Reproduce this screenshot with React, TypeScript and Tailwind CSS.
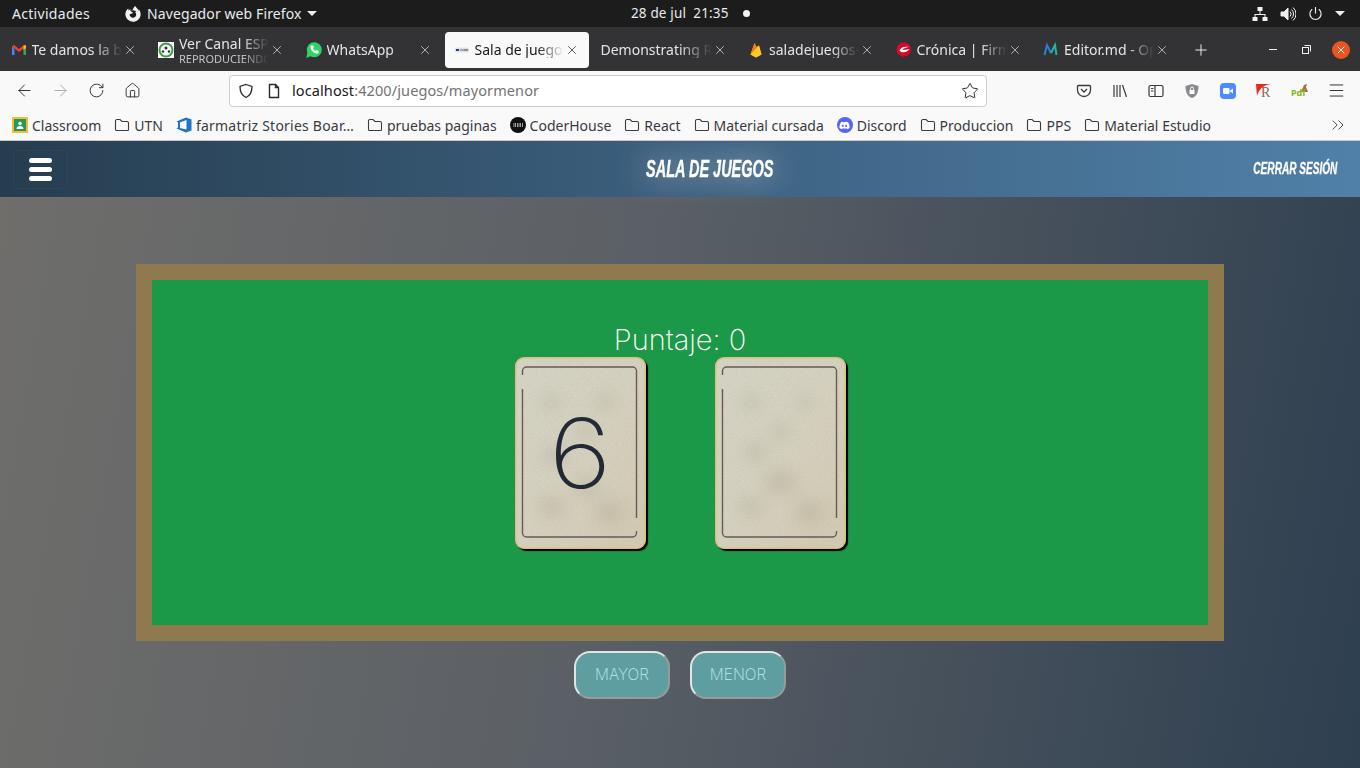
import React from "react";
import { ArrowLeft, ArrowRight, RotateCw, Home, Star, Menu, ChevronsRight, X, Plus, Phone } from "lucide-react";
import { FaFirefoxBrowser, FaDiscord } from "react-icons/fa";

const Folder = () => (
  <svg width="16" height="16" viewBox="0 0 16 16" fill="none" stroke="#3b3b3f" strokeWidth="1.1" className="shrink-0">
    <path d="M1.5 12.5V4a1.5 1.5 0 0 1 1.5-1.5h3l2 2h5A1.5 1.5 0 0 1 14.5 6v6.500A1 1 0 0 1 13.500 13.500h-11A1 1 0 0 1 1.500 12.500z" />
  </svg>
);

const Gmail = () => (
  <svg width="16" height="16" viewBox="0 0 16 16" className="shrink-0">
    <path d="M1 4v9h2.500V7z" fill="#4285f4" />
    <path d="M15 4v9h-2.500V7z" fill="#34a853" />
    <path d="M1 4.500 3 3l5 4 5-4 2 1.500-7 5.500z" fill="#ea4335" />
    <path d="M12.500 3.600 15 3v3l-2.500 2z" fill="#fbbc04" />
  </svg>
);

const Soccer = () => (
  <svg width="16" height="16" viewBox="0 0 16 16" className="shrink-0">
    <rect width="16" height="16" fill="#fff" />
    <circle cx="8" cy="8" r="7.500" fill="#3f9b45" />
    <circle cx="8" cy="8" r="5.500" fill="#f4f4f4" />
    <circle cx="8" cy="6" r="1.500" fill="#333" />
    <circle cx="5" cy="9.500" r="1.200" fill="#333" />
    <circle cx="11" cy="9.500" r="1.200" fill="#333" />
  </svg>
);

const WhatsApp = () => (
  <span className="relative h-4 w-4 shrink-0">
    <svg width="16" height="16" viewBox="0 0 16 16" className="absolute left-0 top-0">
      <circle cx="8.300" cy="7.700" r="7.500" fill="#2fd366" />
      <path d="M0.200 16 1.500 10.500 5 14z" fill="#2fd366" />
    </svg>
    <Phone size={9} fill="#fff" color="#fff" className="absolute left-[4px] top-[3px]" />
  </span>
);

const Gamepad = () => (
  <svg width="16" height="16" viewBox="0 0 16 16" className="shrink-0">
    <rect x="0.500" y="5.500" width="15" height="5" rx="2.500" fill="#dfe3e8" />
    <rect x="2" y="7" width="3" height="2" fill="#2d3f7a" />
    <rect x="6" y="7.500" width="4" height="1" fill="#6a7380" />
    <circle cx="11" cy="8" r="1" fill="#c0504d" />
    <circle cx="13" cy="8" r="1" fill="#3f8f4f" />
  </svg>
);

const Firebase = () => (
  <svg width="16" height="16" viewBox="0 0 16 16" className="shrink-0">
    <path d="M2.500 12.500 6.500 1l2 4L11 3.500l2.500 9L8 15.500z" fill="#ffa000" />
    <path d="M2.500 12.500 6.500 1 9 6z" fill="#f57f17" />
    <path d="M2.500 12.500 11 3.500l2.500 9L8 15.500z" fill="#ffca28" />
  </svg>
);

const Cronica = () => (
  <svg width="16" height="16" viewBox="0 0 16 16" className="shrink-0">
    <path d="M8 0.500a7 7 0 0 1 0 14l-1 1-1-1.200A7 7 0 0 1 8 0.500z" fill="#d9082a" />
    <path d="M3.500 8.500c1-3 5-4.500 9-3.500-2.500.5-4.500 1-6 2.500 2 .5 4.500 0 7-.5-2 3-7.500 5-10 1.500z" fill="#fff" />
  </svg>
);

const EditorM = () => (
  <svg width="16" height="16" viewBox="0 0 16 16" className="shrink-0" fill="none" strokeWidth="2">
    <path d="M1.500 13 4 3l4 8" stroke="#2d7fd3" />
    <path d="M8 11l4-8 1.500 10" stroke="#24b3a8" />
  </svg>
);

const Classroom = () => (
  <svg width="16" height="16" viewBox="0 0 16 16" className="shrink-0">
    <rect width="16" height="16" rx="1" fill="#f9bb2d" />
    <rect x="2" y="2" width="12" height="12" fill="#249a5a" />
    <circle cx="8" cy="6.500" r="1.700" fill="#fff" />
    <path d="M4.500 12c0-2 1.500-3 3.500-3s3.500 1 3.500 3z" fill="#fff" />
  </svg>
);

const Azure = () => (
  <svg width="16" height="16" viewBox="0 0 16 16" className="shrink-0">
    <path d="M0.500 4.500 10 0.500 15.500 2.500v11L10 15.500 0.500 11.500l1.500-1V5.500z" fill="#1e73c9" />
    <path d="M4 5.500 10.500 3v9.500l-6.500-1.500z" fill="#fff" />
  </svg>
);

const Coder = () => (
  <svg width="16" height="16" viewBox="0 0 16 16" className="shrink-0">
    <circle cx="8" cy="8" r="8" fill="#111" />
    <rect x="3" y="6" width="10" height="4" fill="#dcdcdc" opacity=".7" />
    <path d="M4 6v4M6.500 6v4M9 6v4M11.500 6v4" stroke="#111" strokeWidth="1" />
  </svg>
);

type TabData = { title: string; icon: React.ReactNode; sub?: string; active?: boolean };

const tabs: TabData[] = [
  { title: "Te damos la bienvenida", icon: <Gmail /> },
  { title: "Ver Canal ESPN", sub: "REPRODUCIENDO", icon: <Soccer /> },
  { title: "WhatsApp", icon: <WhatsApp /> },
  { title: "Sala de juegos", icon: <Gamepad />, active: true },
  { title: "Demonstrating React", icon: null },
  { title: "saladejuegos-tp", icon: <Firebase /> },
  { title: "Crónica | Firmes", icon: <Cronica /> },
  { title: "Editor.md - Open", icon: <EditorM /> },
];

function Tab({ t }: { t: TabData }) {
  return (
    <div
      className={
        "relative flex h-9 shrink-0 items-center gap-[5px] rounded-[4px] pl-[9px] " +
        (t.active
          ? "ml-[0.500px] mr-[1.500px] w-[144px] bg-[#f9f9fa] pr-[10px] text-[#18181a]"
          : "w-[146px] pr-[11px] text-[#e4e4e6]")
      }
    >
      {t.icon}
      <div className="-mr-[4px] min-w-0 flex-1 overflow-hidden whitespace-nowrap [mask-image:linear-gradient(to_right,black_70%,transparent_100%)]">
        <div className="text-[14px] leading-[17px]">{t.title}</div>
        {t.sub && <div className="text-[11px] leading-[13px] text-[#c4c4c6]">{t.sub}</div>}
      </div>
      <X size={14} strokeWidth={1.2} className="shrink-0" />
    </div>
  );
}

function Bookmark({ label, icon, wide }: { label: string; icon?: React.ReactNode; wide?: boolean }) {
  return (
    <div className="flex shrink-0 items-center gap-[4px] whitespace-nowrap">
      {icon ?? <Folder />}
      <span className={wide ? "tracking-[0.22px]" : ""}>{label}</span>
    </div>
  );
}

function ToolBtn({ children }: { children: React.ReactNode }) {
  return <div className="flex h-8 w-9 shrink-0 items-center justify-center">{children}</div>;
}

function CardFace({ id, blotch }: { id: string; blotch: [number, number, number][] }) {
  return (
    <svg width="131" height="192" viewBox="0 0 131 192" className="absolute inset-0">
      <defs>
        <filter id={id} x="0" y="0" width="100%" height="100%">
          <feTurbulence type="fractalNoise" baseFrequency="0.85" numOctaves="3" seed="4" />
          <feColorMatrix values="0 0 0 0 0.50  0 0 0 0 0.48  0 0 0 0 0.40  1.400 0 0 0 -0.50" />
        </filter>
        <filter id={id + "b"} x="-200%" y="-200%" width="500%" height="500%">
          <feGaussianBlur stdDeviation="8" />
        </filter>
        <linearGradient id={id + "g"} x1="0" y1="0" x2="1" y2="1">
          <stop offset="0" stopColor="#d6d5c6" />
          <stop offset="0.500" stopColor="#d6d2c0" />
          <stop offset="1" stopColor="#d3cab2" />
        </linearGradient>
        <clipPath id={id + "c"}>
          <rect x="1.500" y="1.500" width="128" height="189" rx="8" />
        </clipPath>
      </defs>
      <rect x="0" y="0" width="131" height="192" rx="9" fill="#e0bd7c" />
      <rect x="1.500" y="1.500" width="128" height="189" rx="8" fill={`url(#${id}g)`} />
      <g clipPath={`url(#${id}c)`}>
        {blotch.map(([x, y, r], i) => (
          <ellipse key={i} cx={x} cy={y} rx={r * 1.3} ry={r} fill="#948a72" opacity=".28" filter={`url(#${id}b)`} />
        ))}
        <rect x="1.500" y="1.500" width="128" height="189" filter={`url(#${id})`} opacity=".5" />
      </g>
      <path
        d="M7.500 18V14a4 4 0 0 1 4-4h106a4 4 0 0 1 4 4v147M7.500 32v144a4 4 0 0 0 4 4h106a4 4 0 0 0 4-4v-2"
        fill="none"
        stroke="#6a5a55"
        strokeWidth="1.400"
      />
    </svg>
  );
}

function Card({ value, id, blotch }: { value?: string; id: string; blotch: [number, number, number][] }) {
  return (
    <div className="relative flex h-[192px] w-[131px] items-center justify-center rounded-[9px] shadow-[2px_2px_1px_#000]">
      <CardFace id={id} blotch={blotch} />
      {value && (
        <span className="relative scale-x-[1.12] font-['Inter',sans-serif] text-[96px] font-[200] leading-none text-[#232a35]">
          {value}
        </span>
      )}
    </div>
  );
}

const GameBtn = ({ label }: { label: string }) => (
  <button className="h-12 w-24 rounded-2xl border-2 border-t-[#e4e4e4] border-l-[#e4e4e4] border-r-[#9a9a9a] border-b-[#9a9a9a] bg-[#5f9ea0] font-['Inter',sans-serif] text-[15.500px] font-[200] text-[#bfe9f5]">
    {label}
  </button>
);

export default function App() {
  return (
    <div className="flex h-[768px] w-[1360px] flex-col overflow-hidden font-['Noto_Sans',sans-serif]">
      {/* GNOME bar */}
      <div className="relative flex h-[27px] shrink-0 items-center bg-[#1c1c1c] pl-3 pr-[15px] text-[14px] text-[#e8eaee]">
        <span className="tracking-[0.3px]">Actividades</span>
        <div className="ml-[35px] flex items-center gap-[6px]">
          <FaFirefoxBrowser size={16} color="#f2f2f2" />
          <span className="tracking-[0.1px]">Navegador web Firefox</span>
          <span className="h-0 w-0 border-x-[5px] border-t-[5px] border-x-transparent border-t-[#eeeeee]" />
        </div>
        <div className="absolute left-[631px] top-0 flex h-[27px] items-center gap-[14px] text-[13.500px]">
          <span className="tracking-[0.15px]">28 de jul&nbsp; 21:35</span>
          <span className="h-[7px] w-[7px] rounded-full bg-[#f2f2f2]" />
        </div>
        <div className="ml-auto flex items-center gap-[12px]">
          <svg width="16" height="16" viewBox="0 0 16 16" fill="#f0f0f0">
            <rect x="5.500" y="1" width="5" height="4" />
            <rect x="0.500" y="11" width="5" height="4" />
            <rect x="10.500" y="11" width="5" height="4" />
            <path d="M7.500 5h1v3H13.500v3h-1V9h-9v2h-1V8h5z" />
          </svg>
          <svg width="16" height="16" viewBox="0 0 16 16" fill="none" stroke="#f0f0f0" strokeWidth="1">
            <path d="M1 6h3l4-4v12l-4-4H1z" fill="#f0f0f0" />
            <path d="M10 5.500a3.500 3.500 0 0 1 0 5M11.500 3.500a6 6 0 0 1 0 9M13 1.500a8.500 8.500 0 0 1 0 13" />
          </svg>
          <svg width="15" height="15" viewBox="0 0 16 16" fill="none" stroke="#f0f0f0" strokeWidth="1.200">
            <path d="M8 1v7M4.500 3.500a6 6 0 1 0 7 0" />
          </svg>
          <span className="h-0 w-0 border-x-[5px] border-t-[5px] border-x-transparent border-t-[#eeeeee]" />
        </div>
      </div>

      {/* Tabs */}
      <div className="flex h-[44px] shrink-0 items-center gap-[1.500px] bg-[#333335] pl-[1.500px] pt-[1px]">
        {tabs.map((t) => (
          <Tab key={t.title} t={t} />
        ))}
        <Plus size={18} strokeWidth={1.3} color="#f0f0f0" className="ml-[10px]" />
        <div className="ml-auto flex items-center pr-[10px]">
          <span className="h-px w-2 bg-[#f0f0f0]" />
          <svg width="11" height="11" viewBox="0 0 11 11" fill="none" stroke="#f0f0f0" className="ml-[24px]">
            <rect x="1.500" y="3.500" width="6" height="6" />
            <path d="M3.500 1.500h6v6" />
          </svg>
          <span className="ml-[20px] flex h-[18px] w-[18px] items-center justify-center rounded-full bg-[#e95420]">
            <X size={12} strokeWidth={2} color="#fff" />
          </span>
        </div>
      </div>

      {/* Toolbar */}
      <div className="flex h-[39px] shrink-0 items-center bg-[#f9f9fa] pl-[6px] pr-[6px]">
        <ToolBtn><ArrowLeft size={19} strokeWidth={1.2} color="#2a2a2e" /></ToolBtn>
        <ToolBtn><ArrowRight size={19} strokeWidth={1.2} color="#a9a9ab" /></ToolBtn>
        <ToolBtn><RotateCw size={17} strokeWidth={1.3} color="#2a2a2e" /></ToolBtn>
        <ToolBtn><Home size={17} strokeWidth={1.3} color="#2a2a2e" /></ToolBtn>
        <div className="ml-[79px] flex h-[32px] w-[758px] shrink-0 items-center rounded-[4px] border border-[#cccccc] bg-white pl-[8px] pr-[7px] text-[14.500px] tracking-[0.1px]">
          <svg width="16" height="16" viewBox="0 0 16 16" fill="none" stroke="#2a2a2e" strokeWidth="1.300">
            <path d="M8 1.500 14 3.500c0 5-1.500 9-6 11-4.500-2-6-6-6-11z" />
          </svg>
          <svg width="16" height="16" viewBox="0 0 16 16" fill="none" stroke="#2a2a2e" strokeWidth="1.400" className="ml-[12px]">
            <path d="M3.500 1.500h6l3 3v10h-9zM9.500 1.500v3h3" />
          </svg>
          <span className="ml-[10px] text-[#18181a]">localhost</span>
          <span className="text-[#737373]">:4200/juegos/mayormenor</span>
          <Star size={18} strokeWidth={1.3} color="#2a2a2e" className="ml-auto" />
        </div>
        <div className="ml-auto flex items-center">
          <ToolBtn>
            <svg width="16" height="16" viewBox="0 0 16 16" fill="none" stroke="#3a3a3e" strokeWidth="1.300">
              <path d="M2.500 2.500h11a1 1 0 0 1 1 1V7a6.500 6.500 0 0 1-13 0V3.500a1 1 0 0 1 1-1z" />
              <path d="M5 6l3 3 3-3" />
            </svg>
          </ToolBtn>
          <ToolBtn>
            <svg width="16" height="16" viewBox="0 0 16 16" fill="none" stroke="#3a3a3e" strokeWidth="1.200">
              <path d="M2 2v12M5 2v12M8 2v12M10.500 2 14.500 14" />
            </svg>
          </ToolBtn>
          <ToolBtn>
            <svg width="16" height="16" viewBox="0 0 16 16" fill="none" stroke="#3a3a3e" strokeWidth="1.200">
              <rect x="1" y="2.500" width="14" height="11" rx="1.500" />
              <path d="M7 2.500v11M3 5.500h2.500M3 8h2.500" />
            </svg>
          </ToolBtn>
          <ToolBtn>
            <svg width="16" height="16" viewBox="0 0 16 16">
              <path d="M8 1 14.500 3c0 6-1.500 10-6.500 12C3 13 1.500 9 1.500 3z" fill="#8a8a8e" />
              <rect x="5.500" y="7" width="5" height="4" fill="#fff" />
              <path d="M6.500 7V5.500a1.500 1.500 0 0 1 3 0V7" fill="none" stroke="#fff" />
            </svg>
          </ToolBtn>
          <ToolBtn>
            <svg width="16" height="16" viewBox="0 0 16 16">
              <rect width="16" height="16" rx="4" fill="#4a8cff" />
              <rect x="3" y="5" width="6.500" height="6" rx="1.300" fill="#fff" />
              <path d="M10 7.500 13 5.500v5L10 8.500z" fill="#fff" />
            </svg>
          </ToolBtn>
          <ToolBtn>
            <div className="relative h-[16px] w-[16px]">
              <svg width="16" height="16" viewBox="0 0 16 16" className="absolute left-0 top-0">
                <path d="M0 1h15C7 2 3 6 1 13z" fill="#e8261c" />
              </svg>
              <span className="absolute left-[5px] top-[3px] font-['Liberation_Serif',serif] text-[14px] leading-[14px] text-[#96604a]">R</span>
            </div>
          </ToolBtn>
          <ToolBtn>
            <div className="relative h-[16px] w-[18px]">
              <svg width="18" height="16" viewBox="0 0 18 16" className="absolute left-0 top-0">
                <path d="M10 9 13 2l3-1-1 3 2 5z" fill="#a5703a" />
              </svg>
              <span className="absolute left-0 top-[5px] text-[9px] font-bold leading-[10px] text-[#84b51a]">Pdf</span>
            </div>
          </ToolBtn>
          <ToolBtn><Menu size={19} strokeWidth={1.2} color="#2a2a2e" /></ToolBtn>
        </div>
      </div>

      {/* Bookmarks */}
      <div className="flex h-[31px] shrink-0 items-center gap-[13px] border-b border-[#c9c9c9] bg-[#f9f9fa] pl-[12px] pr-[12px] text-[14px] text-[#3a3a3e]">
        <Bookmark label="Classroom" icon={<Classroom />} />
        <Bookmark label="UTN" />
        <Bookmark label="farmatriz Stories Boar…" icon={<Azure />} wide />
        <Bookmark label="pruebas paginas" />
        <Bookmark label="CoderHouse" icon={<Coder />} />
        <Bookmark label="React" />
        <Bookmark label="Material cursada" />
        <Bookmark
          label="Discord"
          icon={
            <span className="flex h-4 w-4 shrink-0 items-center justify-center rounded-full bg-[#5865f2]">
              <FaDiscord size={11} color="#fff" />
            </span>
          }
        />
        <Bookmark label="Produccion" />
        <Bookmark label="PPS" />
        <Bookmark label="Material Estudio" />
        <ChevronsRight size={20} strokeWidth={1.1} className="ml-auto" />
      </div>

      {/* Page */}
      <div className="flex flex-1 flex-col bg-[linear-gradient(100deg,#6f6e6b_0%,#5b6066_45%,#2e3f50_100%)]">
        <header className="relative flex h-[56px] shrink-0 items-center justify-between bg-[linear-gradient(90deg,#263d4f_0%,#3c607f_50%,#5080a8_100%)] pl-[13px] pr-[23px]">
          <div className="flex h-[39px] w-[55px] flex-col items-center justify-center gap-[4px] rounded-[5px] border border-[#2f4557]">
            <span className="h-[5px] w-[23px] rounded-full bg-white" />
            <span className="h-[5px] w-[23px] rounded-full bg-white" />
            <span className="h-[5px] w-[23px] rounded-full bg-white" />
          </div>
          <h1 className="absolute left-[646px] top-[14px] origin-left scale-x-[0.63] whitespace-nowrap font-['Liberation_Sans',sans-serif] text-[23px] font-bold uppercase italic leading-[28px] text-white [-webkit-text-stroke:0.4px_white] [text-shadow:0_0_44px_rgba(255,255,255,1)]">
            Sala de juegos
          </h1>
          <span className="origin-right scale-x-[0.63] whitespace-nowrap font-['Liberation_Sans',sans-serif] text-[16px] font-bold uppercase italic text-white [-webkit-text-stroke:0.3px_white]">
            Cerrar sesión
          </span>
        </header>

        <main className="flex flex-1 flex-col items-center pt-[67px]">
          <section className="h-[377px] w-[1088px] border-[16px] border-[#8f7a4f] bg-[#1c9849] pt-[43px]">
            <p className="text-center font-['Inter',sans-serif] text-[29px] font-[200] leading-[34px] text-white">
              Puntaje: 0
            </p>
            <div className="flex justify-center gap-[69px]">
              <Card id="c1" value="6" blotch={[[36, 45, 7], [90, 45, 7], [70, 75, 7], [40, 98, 9], [95, 155, 10], [36, 150, 9], [72, 130, 8]]} />
              <Card id="c2" blotch={[[36, 45, 7], [90, 45, 6], [65, 75, 7], [40, 95, 8], [65, 125, 11], [95, 155, 10], [36, 150, 8]]} />
            </div>
          </section>
          <div className="mt-[10px] flex gap-5">
            <GameBtn label="MAYOR" />
            <GameBtn label="MENOR" />
          </div>
        </main>
      </div>
    </div>
  );
}
